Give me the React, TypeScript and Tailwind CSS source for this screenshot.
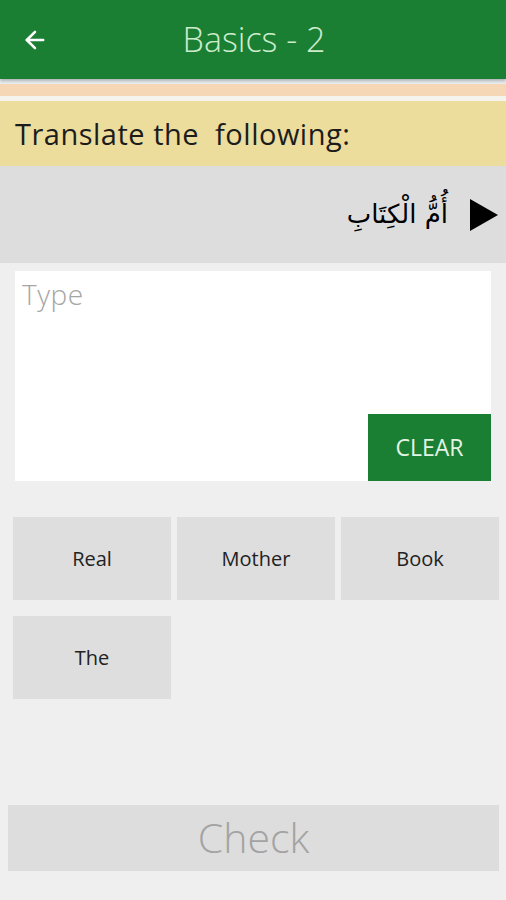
import { ArrowLeft } from "lucide-react";

const words = ["Real", "Mother", "Book", "The"];

export default function App() {
  return (
    <div
      className="flex h-[900px] w-[506px] flex-col bg-[#efefef]"
      style={{ fontFamily: "'Open Sans', Lato, sans-serif" }}
    >
      {/* toolbar */}
      <div className="relative z-10 flex h-[79px] items-center bg-[#1b7f33] shadow-[0_2px_3px_rgba(0,0,0,0.25)]">
        <ArrowLeft className="ml-[21px] h-[28px] w-[28px] text-white" strokeWidth={2.2} />
        <div className="flex-1 pr-[47px] text-center text-[34px] font-light text-[#cdeccd]">
          Basics - 2
        </div>
      </div>
      <div className="h-[5px] bg-[#eaeef0]" />
      <div className="h-[12px] bg-[#f5d7b6]" />
      <div className="h-[5px] bg-[#f5f3ee]" />

      {/* prompt */}
      <div className="flex h-[65px] items-center bg-[#ecdd9c] px-[15px]">
        <span className="whitespace-pre text-[29px] tracking-[0.5px] text-[#1c1c1c]">
          Translate the  following:
        </span>
      </div>

      <div className="flex h-[97px] items-center justify-end gap-[22px] bg-[#dddddd] pr-[8px]">
        <span
          dir="rtl"
          className="text-[26px] text-black"
          style={{ fontFamily: "'DejaVu Sans', sans-serif" }}
        >
          أُمُّ الْكِتَابِ
        </span>
        <svg width="28" height="32" viewBox="0 0 28 32">
          <path d="M0 0 L28 16 L0 32 Z" fill="#000" />
        </svg>
      </div>

      {/* answer box */}
      <div className="mx-[15px] mt-[8px] flex h-[210px] flex-col bg-white">
        <div className="px-[7px] pt-[2px] text-[28px] font-light tracking-[0.5px] text-[#a5a5a5]">Type</div>
        <div className="mt-auto flex justify-end">
          <button className="flex h-[67px] w-[123px] items-center justify-center bg-[#1b7f33] text-[23px] text-[#e4f4e4]">
            CLEAR
          </button>
        </div>
      </div>

      {/* word bank */}
      <div className="ml-[13px] mr-[7px] mt-[36px] grid grid-cols-3 gap-x-[6px] gap-y-[16px]">
        {words.map((w) => (
          <div
            key={w}
            className="flex h-[83px] items-center justify-center bg-[#dedede] text-[20px] text-[#222]"
          >
            {w}
          </div>
        ))}
      </div>

      <div className="mt-auto mb-[29px] px-[8px]">
        <div className="flex h-[66px] w-[491px] items-center justify-center bg-[#dddddd] text-[41px] font-light text-[#a3a3a3]">
          Check
        </div>
      </div>
    </div>
  );
}
